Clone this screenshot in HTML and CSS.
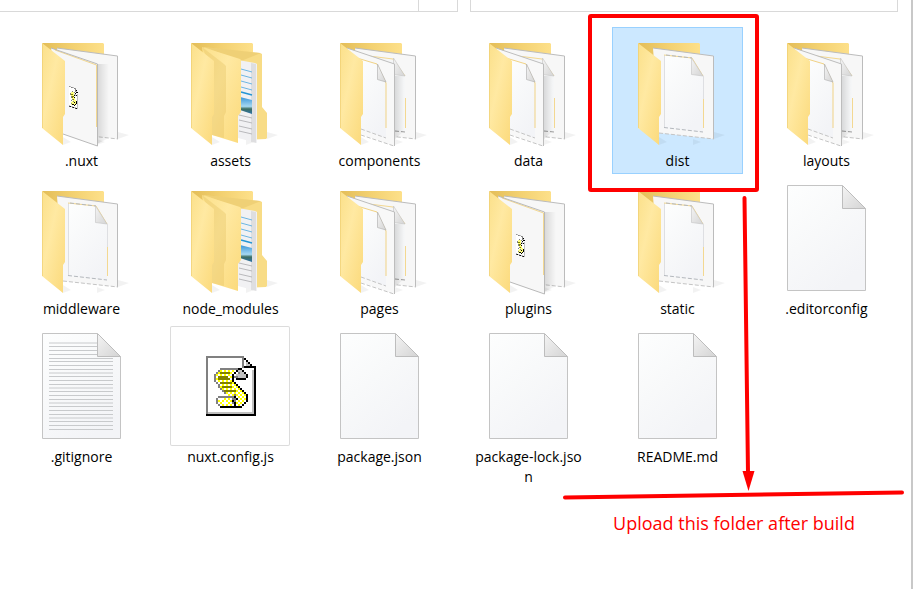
FILE: index.html
```html
<!DOCTYPE html>
<html lang="en">
<head>
<meta charset="utf-8">
<meta name="viewport" content="width=device-width, initial-scale=1">
<title>Project files</title>
<link rel="stylesheet" href="styles.css">
</head>
<body>
<svg class="sprite" width="0" height="0" aria-hidden="true">
  <defs>
    <linearGradient id="g-cover" x1="0" y1="0" x2="1" y2="1">
      <stop offset="0" stop-color="#fbe08a"/><stop offset=".4" stop-color="#ffe9a2"/><stop offset="1" stop-color="#fbd97a"/>
    </linearGradient>
    <linearGradient id="g-back" x1="0" y1="0" x2="1" y2="0">
      <stop offset="0" stop-color="#e3bd58"/><stop offset=".5" stop-color="#f3d171"/><stop offset="1" stop-color="#fde08a"/>
    </linearGradient>
    <linearGradient id="g-file" x1="0" y1="0" x2=".6" y2="1">
      <stop offset="0" stop-color="#fdfefe"/><stop offset=".5" stop-color="#f8f9fa"/><stop offset="1" stop-color="#f3f4f7"/>
    </linearGradient>
    <linearGradient id="g-fold" x1="0" y1="0" x2="1" y2="1">
      <stop offset="0" stop-color="#f4f4f4"/><stop offset="1" stop-color="#d4d4d4"/>
    </linearGradient>
    <linearGradient id="g-shade" x1="0" y1="0" x2="1" y2="0">
      <stop offset="0" stop-color="#000" stop-opacity=".13"/><stop offset="1" stop-color="#000" stop-opacity="0"/>
    </linearGradient>
    <linearGradient id="g-photo" x1="0" y1="0" x2="0" y2="1">
      <stop offset="0" stop-color="#3b96d8"/><stop offset=".55" stop-color="#a5d8f2"/><stop offset=".7" stop-color="#3d6f62"/><stop offset="1" stop-color="#2d72a8"/>
    </linearGradient>
    <pattern id="p-dither" width="2" height="2" patternUnits="userSpaceOnUse">
      <path fill="#fff" d="M0 0h2v2H0z"/><path fill="#ff0" d="M0 0h1v1H0zM1 1h1v1H1z"/>
    </pattern>

    <symbol id="script" viewBox="0 0 25 30">
      <g shape-rendering="crispEdges">
        <path fill="#fff" d="M0 0h19l6 6v24H0z"/>
        <path fill="#c0c0c0" d="M1 28h23v1H1zM23 7h1v22h-1z"/>
        <path fill="#808080" d="M0 0h19v1H0zM0 0h1v29H0zM18 1h1v5h-1z"/>
        <path fill="#c0c0c0" d="M20 3h1v1h1v1h1v1h-3z"/>
        <path fill="#000" d="M0 29h25v1H0zM24 6h1v24h-1zM19 5h6v1h-6zM19 1h1v1h1v1h1v1h1v1h1v1h-1V5h-1V4h-1V3h-1V2h-1z"/>
        <path fill="url(#p-dither)" d="M7 7h9v1h-1v1h-1v5h1v1h1v1h1v1h1v1h1v1h1v5h-1v1h-2v1H6v-1H5v-4h1v-1h5v-1h-1v-1H9v-1H8v-1H7v-1H6v-1H5v-1H4V9h1V8h2z"/>
        <path fill="#808080" d="M7 6h9v1H7zM6 7h1v1H6zM5 8h1v1H5zM4 9h1v4H4zM5 13h1v1H5zM6 14h1v2H6zM7 16h1v1H7zM8 17h1v1H8zM9 18h1v1H9zM6 20h8v1H6zM5 21h1v3H5zM6 24h1v1H6zM14 19h1v1h-1z"/>
        <path fill="#c0c0c0" d="M16 7h2v1h1v1h1v2h-5V9h1z"/>
        <path fill="#808080" d="M14 10h2v1h-2zM16 8h1v1h-1zM13 21h2v3h-2z"/>
        <path fill="#fff" d="M6 21h2v1H6zM8 23h3v1H8zM16 19h1v1h-1z"/>
        <path fill="#808000" d="M7 8h5v1H7zM6 10h5v1H6zM6 11h6v1H6zM7 13h6v1H7zM8 15h5v1H8zM9 17h6v1H9z"/>
        <path fill="#000" d="M16 6h2v1h-2zM15 7h1v1h-1zM18 7h1v1h-1zM14 8h1v1h-1zM19 8h1v1h-1zM20 9h1v2h-1zM13 9h1v4h-1zM15 11h5v1h-5zM14 13h1v1h-1zM15 14h1v1h-1zM16 15h1v1h-1zM17 16h1v1h-1zM18 17h1v1h-1zM19 18h1v1h-1zM20 19h1v4h-1zM19 23h1v1h-1zM18 24h1v1h-1zM7 25h11v1H7zM14 20h1v1h-1zM15 21h1v1h-1zM13 22h1v1h-1zM14 23h1v2h-1z"/>
      </g>
    </symbol>

    <symbol id="folder-cover" viewBox="0 0 120 120">
      <path fill="url(#g-cover)" d="M21 13 44 31V84l-2 3v28L21 98z"/>
      <path fill="none" stroke="#edcb6c" stroke-opacity=".6" d="M21.500 14v84"/>
    </symbol>
    <symbol id="folder-back" viewBox="0 0 120 120">
      <path fill="#000" opacity=".05" d="M42 115l8-3-8-5zM97 109l11-4-11-3zM76 115l8-3-8-3z"/>
      <path fill="url(#g-back)" d="M21 13h61l1 1v50H44z"/>
    </symbol>

    <symbol id="sheet-back" viewBox="0 0 120 120">
      <path fill="#f7f7f7" d="M36 18 97 26v83l-55-6z"/>
      <path fill="none" stroke="#bcbcbc" d="M36 18 96.500 26v83"/>
      <path fill="none" stroke="#c4c4c4" stroke-dasharray="4 2" d="M42 103l55 6"/>
    </symbol>

    <symbol id="folder-page" viewBox="0 0 120 120">
      <use href="#folder-back"/>
      <use href="#sheet-back"/>
      <path fill="url(#g-file)" d="M47 25 75 28 86 46v56l-39-4z"/>
      <path fill="none" stroke="#dedfe2" d="M47.500 25v72M86.500 46v23"/>
      <path fill="none" stroke="#f3d891" d="M47 25 75 28 86 46M86.500 69v29"/>
      <path fill="none" stroke="#b4b8bd" stroke-dasharray="4 2" d="M47 97.500l39 4.500M49 25l26 3"/>
      <path fill="url(#g-fold)" stroke="#c2c2c2" stroke-width=".6" d="M74.500 28v16.500L86 46z"/>
      <use href="#folder-cover"/>
    </symbol>

    <symbol id="folder-pages" viewBox="0 0 120 120">
      <use href="#folder-back"/>
      <use href="#sheet-back"/>
      <path fill="#f5f6f7" d="M50 26 74 29 86 46v56l-36-4z"/>
      <path fill="none" stroke="#f3d891" d="M50 26 74 29 86 46M86.500 68v30"/>
      <path fill="none" stroke="#999" stroke-dasharray="4 2" d="M76 101l10 1"/>
      <path fill="url(#g-fold)" stroke="#c2c2c2" stroke-width=".6" d="M74.500 28v16.500L86 46z"/>
      <path fill="url(#g-shade)" d="M75 46h10v55l-10 9z"/>
      <path fill="#f8f8f8" d="M28 18 75 34v82l-33-12z"/>
      <path fill="url(#g-file)" d="M38 28 58 34 67 53v55l-25-9z"/>
      <path fill="none" stroke="#bdbdbd" d="M28 18 75.500 34v82"/>
      <path fill="none" stroke="#c4c4c4" stroke-dasharray="4 2" d="M42 105l33 11M42 99l25 9"/>
      <path fill="none" stroke="#f0d285" d="M38 28 58 34 67 53v45"/>
      <path fill="url(#g-fold)" stroke="#b5b5b5" stroke-width=".7" d="M58.500 34v15.500L67 52z"/>
      <use href="#folder-cover"/>
    </symbol>

    <symbol id="folder-script" viewBox="0 0 120 120">
      <use href="#folder-back"/>
      <use href="#sheet-back"/>
      <path fill="url(#g-shade)" d="M76 34h12v74l-12 6z"/>
      <path fill="#f7f7f7" d="M30 18 77 34v82l-35-12z"/>
      <path fill="none" stroke="#f3d891" d="M34 20 75.500 35v62"/>
      <path fill="none" stroke="#b9b9b9" d="M30 18 76.500 34v82L42 104"/>
      <svg x="48" y="56" width="10" height="24" overflow="visible">
        <g transform="matrix(.36 .12 0 .68 0 0)"><use href="#script" width="25" height="30"/></g>
      </svg>
      <use href="#folder-cover"/>
    </symbol>

    <symbol id="folder-nested" viewBox="0 0 120 120">
      <use href="#folder-back"/>
      <path fill="#f8dc86" d="M34 17 90 23l2 1v53l5 6v25l-1 1-20 1z"/>
      <path fill="#e0b95a" opacity=".35" d="M34 17 91 23l-20 8z"/>
      <path fill="#f1f1f3" d="M68 30 85 33l2 1v79l-19-5z"/>
      <path fill="#000" opacity=".08" d="M81 33l5 1v79l-5-1z"/>
      <path fill="none" stroke="#6db6e2" d="M71 39l11 3M71 45l11 3M71 51l11 3M71 57l11 3"/>
      <path fill="none" stroke="#2495d4" stroke-width="1.500" d="M71 62l11 3"/>
      <path fill="url(#g-photo)" d="M70 67l12 3v14l-12-4z"/>
      <path fill="none" stroke="#b9b9bc" d="M69 85l13 3M69 90l13 3M69 96l13 3M69 101l13 3"/>
      <path fill="url(#g-cover)" d="M32 17 70 29l1 1v52l-3 4v27l-26-8z"/>
      <path fill="#e6c265" opacity=".38" d="M32 17 54 34l2 2v46l-2 4v22l-12-3V40z"/>
      <use href="#folder-cover"/>
    </symbol>

    <symbol id="file" viewBox="0 0 120 120">
      <path fill="url(#g-file)" stroke="#c4c4c4" d="M21.500 7.500H76L99.500 31v81.500h-78z"/>
      <path fill="url(#g-fold)" stroke="#bdbdbd" d="M76.500 7.500v23h23z"/>
    </symbol>

    <symbol id="file-text" viewBox="0 0 120 120">
      <use href="#file"/>
      <path fill="none" stroke="#c8cacc" d="M28 17h48M28 20.500h48M28 24.500h48M28 28.500h48M28 32.500h64M28 35.500h64M28 39.500h64M28 43.500h64M28 47h64M28 50.500h64M28 54.500h64M28 58.500h64M28 62h64M28 65.500h64M28 69.500h64M28 73.500h64M28 77h64M28 80.500h64M28 84.500h64M28 88.500h64M28 92h64M28 95.500h64M28 99.500h64M28 103.500h64"/>
    </symbol>
  </defs>
</svg>

<div class="window">
  <header class="toolbar">
    <div class="address"><div class="address-end"></div></div>
    <div class="search"></div>
  </header>
  <main>
    <ul class="files">
      <li class="item"><button class="tile" type="button"><svg class="icon" aria-hidden="true"><use href="#folder-script"/></svg><span class="name">.nuxt</span></button></li>
      <li class="item"><button class="tile" type="button"><svg class="icon" aria-hidden="true"><use href="#folder-nested"/></svg><span class="name">assets</span></button></li>
      <li class="item"><button class="tile" type="button"><svg class="icon" aria-hidden="true"><use href="#folder-pages"/></svg><span class="name">components</span></button></li>
      <li class="item"><button class="tile" type="button"><svg class="icon" aria-hidden="true"><use href="#folder-pages"/></svg><span class="name">data</span></button></li>
      <li class="item">
        <button class="tile tile-selected" type="button" aria-pressed="true"><svg class="icon" aria-hidden="true"><use href="#folder-page"/></svg><span class="name">dist</span></button>
        <div class="note">
          <svg class="note-marks" viewBox="0 0 344 488" aria-hidden="true">
            <rect x="28" y="3" width="167" height="174" rx="1" fill="none" stroke="#f00" stroke-width="4"/>
            <path fill="none" stroke="#f00" stroke-width="4" stroke-linecap="round" d="M182.500 185 186 460M3 484.500 340 479.500"/>
            <path fill="#f00" d="M180.500 458h12l-6 20z"/>
          </svg>
          <p class="note-text">Upload this folder after build</p>
        </div>
      </li>
      <li class="item"><button class="tile" type="button"><svg class="icon" aria-hidden="true"><use href="#folder-pages"/></svg><span class="name">layouts</span></button></li>
      <li class="item"><button class="tile" type="button"><svg class="icon" aria-hidden="true"><use href="#folder-page"/></svg><span class="name">middleware</span></button></li>
      <li class="item"><button class="tile" type="button"><svg class="icon" aria-hidden="true"><use href="#folder-nested"/></svg><span class="name">node_modules</span></button></li>
      <li class="item"><button class="tile" type="button"><svg class="icon" aria-hidden="true"><use href="#folder-pages"/></svg><span class="name">pages</span></button></li>
      <li class="item"><button class="tile" type="button"><svg class="icon" aria-hidden="true"><use href="#folder-script"/></svg><span class="name">plugins</span></button></li>
      <li class="item"><button class="tile" type="button"><svg class="icon" aria-hidden="true"><use href="#folder-page"/></svg><span class="name">static</span></button></li>
      <li class="item"><button class="tile" type="button"><svg class="icon" aria-hidden="true"><use href="#file"/></svg><span class="name">.editorconfig</span></button></li>
      <li class="item"><button class="tile" type="button"><svg class="icon" aria-hidden="true"><use href="#file-text"/></svg><span class="name">.gitignore</span></button></li>
      <li class="item"><button class="tile" type="button"><svg class="icon icon-framed" viewBox="0 0 120 120" aria-hidden="true"><use href="#script" x="36" y="30" width="50" height="60"/></svg><span class="name">nuxt.config.js</span></button></li>
      <li class="item"><button class="tile" type="button"><svg class="icon" aria-hidden="true"><use href="#file"/></svg><span class="name">package.json</span></button></li>
      <li class="item"><button class="tile" type="button"><svg class="icon" aria-hidden="true"><use href="#file"/></svg><span class="name">package-lock.json</span></button></li>
      <li class="item"><button class="tile" type="button"><svg class="icon" aria-hidden="true"><use href="#file"/></svg><span class="name">README.md</span></button></li>
    </ul>
  </main>
</div>
</body>
</html>
```
FILE: styles.css
```css
* {
  box-sizing: border-box;
}

body {
  margin: 0;
  background: #fff;
  color: #000;
  font-family: "Open Sans", "Noto Sans", sans-serif;
}

.sprite {
  position: absolute;
}

.window {
  min-height: 100vh;
  border-right: 2px solid #c8c8c8;
}

.toolbar {
  display: flex;
  gap: 12px;
  height: 12px;
  padding-right: 13px;
}

.address,
.search {
  border: solid #d9d9d9;
}

.address {
  flex: 457;
  border-width: 0 1px 1px 0;
}

.address-end {
  width: 39px;
  height: 100%;
  margin-left: auto;
  border-left: 1px solid #d9d9d9;
}

.search {
  flex: 426;
  border-width: 0 1px 1px;
}

.files {
  display: grid;
  grid-template-columns: repeat(auto-fill, 131px);
  gap: 1px 18px;
  margin: 0;
  padding: 15px 0 0 16px;
  list-style: none;
}

.item {
  position: relative;
}

.tile {
  display: flex;
  flex-direction: column;
  width: 100%;
  padding: 2px 4px;
  border: 1px solid transparent;
  background: none;
  color: inherit;
  font: inherit;
}

.tile-selected {
  border-color: #99d1ff;
  background: #cce8ff;
}

.icon {
  width: 120px;
  height: 120px;
}

.icon-framed {
  border-radius: 2px;
  box-shadow: inset 0 0 0 1px #dcdcdc;
}

.name {
  width: 100%;
  margin-top: 1px;
  padding: 0 4px;
  font-size: 14px;
  line-height: 20px;
  text-align: center;
  word-break: break-all;
}

.note {
  position: absolute;
  z-index: 1;
  top: -14px;
  left: -50px;
  width: 344px;
  color: #f00;
  pointer-events: none;
}

.note-marks {
  display: block;
  width: 100%;
}

.note-text {
  margin: 10px 0 0;
  font-size: 18px;
  line-height: 24px;
  text-align: center;
}
```
